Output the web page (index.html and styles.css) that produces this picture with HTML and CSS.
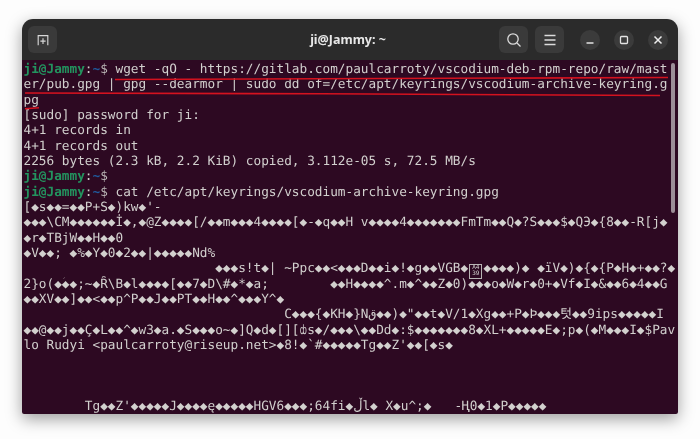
FILE: index.html
```html
<!DOCTYPE html>
<html lang="en">
<head>
<meta charset="utf-8">
<title>ji@Jammy: ~</title>
<link rel="stylesheet" href="styles.css">
</head>
<body>
<main class="window">
  <header class="titlebar">
    <div class="left">
      <button class="btn"><svg width="14" height="14" viewBox="0 0 16 16" fill="none" stroke="#d8d8d8" stroke-width="1.300"><path d="M2.500 14V3h11v11M8 6v6.500M5 9.300h6"/></svg></button>
    </div>
    <div class="title">ji@Jammy: ~</div>
    <div class="right">
      <div class="actions">
        <button class="btn"><svg width="16" height="16" viewBox="0 0 16 16" fill="none" stroke="#dcdcdc" stroke-width="1.300"><circle cx="7" cy="7" r="5.200"/><path d="M11 11l3.500 3.500"/></svg></button>
        <button class="btn"><svg width="16" height="16" viewBox="0 0 16 16" fill="none" stroke="#dcdcdc" stroke-width="1.300"><path d="M2.500 3.500h11M2.500 8h11M2.500 12.500h11"/></svg></button>
      </div>
      <div class="controls">
        <button class="circle"><svg width="12" height="12" viewBox="0 0 12 12" fill="none" stroke="#e4e4e4" stroke-width="1.300"><path d="M2.500 9h7"/></svg></button>
        <button class="circle"><svg width="12" height="12" viewBox="0 0 12 12" fill="none" stroke="#e4e4e4" stroke-width="1.300"><rect x="2.500" y="2.500" width="7" height="7" rx="1"/></svg></button>
        <button class="circle"><svg width="12" height="12" viewBox="0 0 12 12" fill="none" stroke="#ececec" stroke-width="1.500"><path d="M2.500 2.500l7 7M9.500 2.500l-7 7"/></svg></button>
      </div>
    </div>
  </header>
  <section class="terminal">
<pre class="screen"><span class="user">ji@Jammy</span>:<span class="path">~</span><span class="dollar">$</span> wget -qO - https://gitlab.com/paulcarroty/vscodium-deb-rpm-repo/raw/mast
er/pub.gpg | gpg --dearmor | sudo dd of=/etc/apt/keyrings/vscodium-archive-keyring.g
pg
[sudo] password for ji:
4+1 records in
4+1 records out
2256 bytes (2.3 kB, 2.2 KiB) copied, 3.112e-05 s, 72.5 MB/s
<span class="user">ji@Jammy</span>:<span class="path">~</span><span class="dollar">$</span> 
<span class="user">ji@Jammy</span>:<span class="path">~</span><span class="dollar">$</span> cat /etc/apt/keyrings/vscodium-archive-keyring.gpg
[◆s◆◆=◆◆P+S◆)kw◆'-
◆◆◆\CM◆◆◆◆◆◆İ◆,◆@Z◆◆◆◆[/◆◆m◆◆◆4◆◆◆◆[◆-◆q◆◆H v◆◆◆◆4◆◆◆◆◆◆◆FmTm◆◆Q◆?S◆◆◆$◆QЭ◆{8◆◆-R[j◆
◆r◆TBjW◆◆H◆◆0
◆V◆◆; ◆%◆Y◆0◆2◆◆|◆◆◆◆◆Nd%
                         ◆◆◆s!t◆| ~Ppc◆◆&lt;◆◆◆D◆◆i◆!◆g◆◆VGB◆<span class="hexbox">A4<br>39</span>◆◆◆◆)◆ ◆ïV◆)◆{◆{P◆H◆+◆◆?◆
2}o(◆ؘ◆◆;~◆Ȓ\B◆l◆◆◆◆[◆◆7◆D\#◆*◆a;        ◆◆H◆◆◆◆^.m◆^◆◆Z◆0)◆◆◆o◆W◆r◆0+◆Vf◆I◆&amp;◆◆6◆4◆◆G
◆◆XV◆◆]◆◆&lt;◆◆p^P◆◆J◆◆PT◆◆H◆◆^◆◆◆Y^◆
                                  C◆◆◆{◆KH◆}Nق◆◆)◆"◆◆t◆V/1◆Xg◆◆+P◆Þ◆◆◆텃◆◆9ips◆◆◆◆◆I
◆◆@◆◆j◆◆Ç◆L◆◆^◆w3◆a.◆S◆◆◆o~◆]Q◆d◆[][ȸs◆/◆◆◆\◆◆Dd◆:$◆◆◆◆◆◆◆8◆XL+◆◆◆◆◆E◆;p◆(◆M◆◆◆I◆$Pav
lo Rudyi &lt;paulcarroty@riseup.net&gt;◆8!◆`#◆◆◆◆◆Tg◆◆Z'◆◆[◆s◆



        Tg◆◆Z'◆◆◆◆◆J◆◆◆◆ę◆◆◆◆◆HGV6◆◆◆;64fi◆ڵl◆ X◆u^;◆   -Ң0◆1◆P◆◆◆◆◆</pre>
    <div class="scrollbar"></div>
    <svg class="marks" width="656" height="60" viewBox="0 0 656 60" fill="none" stroke="#d4121f" stroke-width="1.600">
      <path d="M93 19.500 L646 17.500"/>
      <path d="M3 33 L300 33.800 L638 35.500"/>
      <path d="M3 48.800 L17 47.800"/>
    </svg>
  </section>
</main>
</body>
</html>
```
FILE: styles.css
```css
html, body {
  margin: 0;
  height: 100%;
  background: #fdfdfd;
  overflow: hidden;
}
body {
  padding: 19px 22px 25px;
  box-sizing: border-box;
}
.window {
  height: 395px;
  display: flex;
  flex-direction: column;
  border-radius: 11px 11px 2px 2px;
  overflow: hidden;
  box-shadow: 0 5px 16px rgba(0, 0, 0, .38);
}
.titlebar {
  height: 41px;
  flex: none;
  background: #2b2b2b;
  display: grid;
  grid-template-columns: 1fr auto 1fr;
  align-items: center;
  padding: 0 10px 0 6px;
  box-sizing: border-box;
}
.left, .right {
  display: flex;
  align-items: center;
}
.right {
  justify-content: flex-end;
}
.btn {
  width: 29px;
  height: 27px;
  padding: 0;
  border: 0;
  border-radius: 6px;
  background: #3a3a3a;
  display: flex;
  align-items: center;
  justify-content: center;
}
.title {
  color: #e8e8e8;
  font: 700 12.500px "Noto Sans", sans-serif;
  filter: blur(.3px);
}
.actions {
  display: flex;
  gap: 7px;
  margin-right: 16px;
}
.controls {
  display: flex;
  gap: 14px;
}
.circle {
  width: 20px;
  height: 20px;
  padding: 0;
  border: 0;
  border-radius: 50%;
  background: #3b3b3b;
  display: flex;
  align-items: center;
  justify-content: center;
}
.terminal {
  flex: 1;
  position: relative;
  background: #2d0922;
  overflow: hidden;
}
.screen {
  margin: 0;
  padding: 2px 0 0 1.500px;
  color: #d2d0ce;
  font: 12.740px/15.330px "DejaVu Sans Mono", "Noto Sans CJK KR", monospace;
  text-rendering: geometricPrecision;
  filter: blur(.35px);
  white-space: pre;
}
.user { color: #23945f; font-weight: 700; }
.path { color: #1f5a9c; font-weight: 700; }
.dollar { color: #b9b4b4; }
.hexbox {
  display: inline-block;
  box-sizing: border-box;
  width: 13.300px;
  height: 15px;
  border: 1px solid #b8b4b4;
  font-size: 6px;
  line-height: 6.500px;
  text-align: center;
  vertical-align: -3px;
  margin: -2px 1px;
}
.scrollbar {
  position: absolute;
  top: 3px;
  right: 3px;
  width: 4px;
  height: 150px;
  border-radius: 2px;
  background: #9c8e98;
}
.marks {
  position: absolute;
  top: 0;
  left: 0;
}
```
